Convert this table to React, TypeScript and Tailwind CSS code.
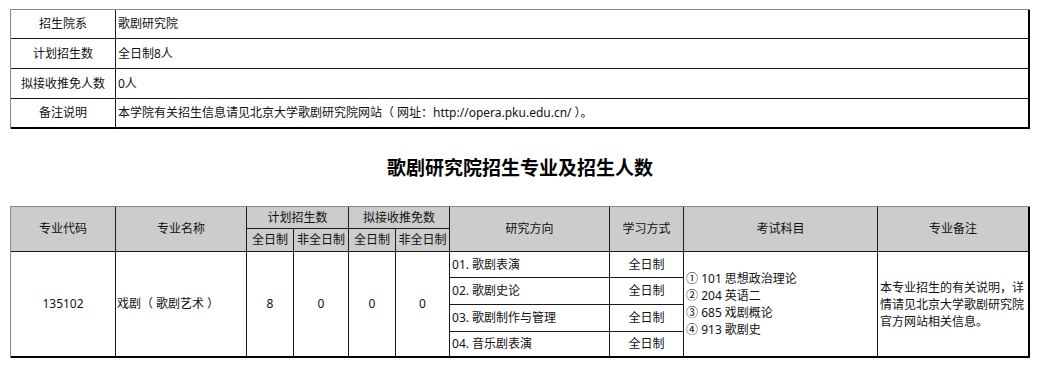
import React from 'react';

const font = { fontFamily: '"Noto Sans", "Noto Sans CJK SC", sans-serif' };

// 全角括号内侧留一点空隙，接近参考图的排版
const Paren = ({ children }: { children: React.ReactNode }) => (
  <>
    （<span className="ml-[3px]">{children}</span>
    <span className="ml-[3px]">）</span>
  </>
);

const info: [string, React.ReactNode][] = [
  ['招生院系', '歌剧研究院'],
  ['计划招生数', '全日制8人'],
  ['拟接收推免人数', '0人'],
  [
    '备注说明',
    <>
      本学院有关招生信息请见北京大学歌剧研究院网站<Paren>网址：http://opera.pku.edu.cn/</Paren>。
    </>,
  ],
];

const directions = ['01. 歌剧表演', '02. 歌剧史论', '03. 歌剧制作与管理', '04. 音乐剧表演'];
const rowH = ['h-[26px]', 'h-[27px]', 'h-[27px]', 'h-[26px]'];

export default function App() {
  const cell = 'border-r border-b border-[#1a1a1a] p-0';
  const head = `${cell} bg-[#cccccc] text-center font-normal`;

  return (
    <div className="w-[1038px] h-[368px] bg-white text-[12px] text-[#111] overflow-hidden" style={font}>
      {/* 基本信息 */}
      <table className="ml-[10px] mt-[9px] w-[1020px] table-fixed border-separate border-spacing-0 border-l border-t border-[#888]">
        <tbody>
          {info.map(([k, v], i) => (
            <tr key={k} className={i === 0 ? 'h-[29px]' : 'h-[30px]'}>
              <td className={`${cell} w-[105px] text-center ${i === info.length - 1 ? 'border-b-2 border-b-black' : ''}`}>{k}</td>
              <td className={`${cell} pl-[2px] border-r-2 border-r-black ${i === info.length - 1 ? 'border-b-2 border-b-black' : ''}`}>{v}</td>
            </tr>
          ))}
        </tbody>
      </table>

      {/* 标题 */}
      <div className="h-[77px] flex items-center justify-center pl-[2px]">
        <h2 className="text-[19px] font-bold text-black mt-[1px]">歌剧研究院招生专业及招生人数</h2>
      </div>

      {/* 招生专业 */}
      <table className="ml-[10px] w-[1020px] table-fixed border-separate border-spacing-0 border-l border-t border-[#888]">
        <colgroup>
          <col className="w-[105px]" />
          <col className="w-[131px]" />
          <col className="w-[47px]" />
          <col className="w-[55px]" />
          <col className="w-[47px]" />
          <col className="w-[54px]" />
          <col className="w-[160px]" />
          <col className="w-[74px]" />
          <col className="w-[194px]" />
          <col />
        </colgroup>
        <thead>
          <tr className="h-[22px]">
            <th rowSpan={2} className={head}>专业代码</th>
            <th rowSpan={2} className={head}>专业名称</th>
            <th colSpan={2} className={head}>计划招生数</th>
            <th colSpan={2} className={head}>拟接收推免数</th>
            <th rowSpan={2} className={head}>研究方向</th>
            <th rowSpan={2} className={head}>学习方式</th>
            <th rowSpan={2} className={head}>考试科目</th>
            <th rowSpan={2} className={`${head} border-r-2 border-r-black`}>专业备注</th>
          </tr>
          <tr className="h-[23px]">
            <th className={head}>全日制</th>
            <th className={head}>非全日制</th>
            <th className={head}>全日制</th>
            <th className={head}>非全日制</th>
          </tr>
        </thead>
        <tbody>
          {directions.map((d, i) => {
            const last = i === directions.length - 1 ? 'border-b-2 border-b-black' : '';
            return (
              <tr key={d} className={rowH[i]}>
                {i === 0 && (
                  <>
                    <td rowSpan={4} className={`${cell} border-b-2 border-b-black text-center`}>135102</td>
                    <td rowSpan={4} className={`${cell} border-b-2 border-b-black pl-[1px]`}>
                      戏剧<Paren>歌剧艺术</Paren>
                    </td>
                    <td rowSpan={4} className={`${cell} border-b-2 border-b-black text-center`}>8</td>
                    <td rowSpan={4} className={`${cell} border-b-2 border-b-black text-center`}>0</td>
                    <td rowSpan={4} className={`${cell} border-b-2 border-b-black text-center`}>0</td>
                    <td rowSpan={4} className={`${cell} border-b-2 border-b-black text-center`}>0</td>
                  </>
                )}
                <td className={`${cell} ${last} pl-[2px]`}>{d}</td>
                <td className={`${cell} ${last} text-center`}>全日制</td>
                {i === 0 && (
                  <>
                    <td rowSpan={4} className={`${cell} border-b-2 border-b-black pl-[2px] leading-[17px]`}>
                      <div>① 101 思想政治理论</div>
                      <div>② 204 英语二</div>
                      <div>③ 685 戏剧概论</div>
                      <div>④ 913 歌剧史</div>
                    </td>
                    <td rowSpan={4} className={`${cell} border-b-2 border-b-black border-r-2 border-r-black pl-[2px] pr-[3px] leading-[17px]`}>
                      本专业招生的有关说明，详情请见北京大学歌剧研究院官方网站相关信息。
                    </td>
                  </>
                )}
              </tr>
            );
          })}
        </tbody>
      </table>
    </div>
  );
}
